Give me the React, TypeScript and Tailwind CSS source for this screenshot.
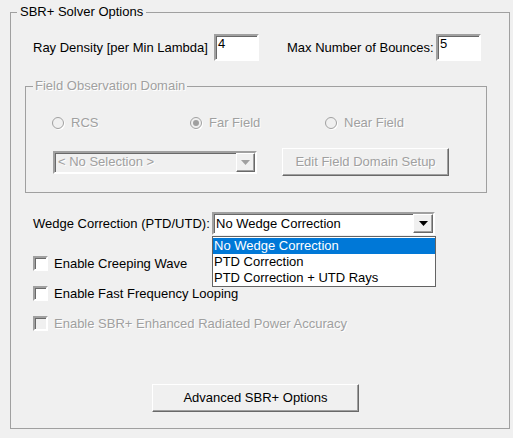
import React from "react";

const sunken =
  "border-2 border-t-[#a0a0a0] border-l-[#a0a0a0] border-b-white border-r-white shadow-[inset_1px_1px_0_#696969]";
const raised =
  "border border-t-white border-l-white border-b-[#696969] border-r-[#696969] shadow-[inset_-1px_-1px_0_#a0a0a0]";
const disabledText = "text-[#a0a0a0] [text-shadow:1px_1px_0_#ffffff]";

function Radio({ label, checked, w }: { label: string; checked?: boolean; w: string }) {
  return (
    <div className={`flex items-center ${w}`}>
      <span className="w-[12px] h-[12px] rounded-full border border-[#a0a0a0] bg-[#f0f0f0] flex items-center justify-center shadow-[1px_1px_0_#ffffff]">
        {checked && <span className="w-[6px] h-[6px] rounded-full bg-[#a0a0a0]" />}
      </span>
      <span className={`ml-[7px] ${disabledText}`}>{label}</span>
    </div>
  );
}

function Check({ label, disabled }: { label: string; disabled?: boolean }) {
  return (
    <div className="flex items-center h-[15px]">
      <span
        className={`w-[15px] h-[15px] ${sunken} ${disabled ? "bg-[#f0f0f0]" : "bg-white"}`}
      />
      <span className={`ml-[6px] ${disabled ? disabledText : "text-black"}`}>{label}</span>
    </div>
  );
}

export default function App() {
  return (
    <div
      className="w-[513px] h-[438px] bg-[#f0f0f0] text-[13px] leading-[14px] text-black overflow-hidden"
      style={{ fontFamily: '"Liberation Sans", Arial, sans-serif' }}
    >
      <fieldset className="ml-[10px] mt-[5px] w-[492px] h-[424px] border border-[#a0a0a0] px-[22px] m-0">
        <legend className="ml-[-16px] px-[3px] text-black">SBR+ Solver Options</legend>

        {/* top numeric inputs */}
        <div className="flex items-center mt-[15px] h-[27px]">
          <span className="w-[181px]">Ray Density [per Min Lambda]</span>
          <div className={`w-[45px] h-[27px] bg-white ${sunken} px-[2px] pt-[1px]`}>4</div>
          <span className="ml-[28px] w-[149px]">Max Number of Bounces:</span>
          <div className={`w-[45px] h-[27px] bg-white ${sunken} px-[2px] pt-[1px]`}>5</div>
        </div>

        {/* field observation domain */}
        <fieldset className="ml-[-8px] mt-[18px] w-[462px] border border-[#a0a0a0] pb-[16px] m-0">
          <legend className={`ml-[7px] px-[2px] ${disabledText}`}>Field Observation Domain</legend>
          <div className="flex items-center h-[14px] mt-[23px] pl-[26px]">
            <Radio label="RCS" w="w-[138px]" />
            <Radio label="Far Field" checked w="w-[135px]" />
            <Radio label="Near Field" w="w-[120px]" />
          </div>
          <div className="flex items-center mt-[18px] ml-[27px]">
            <div className={`w-[204px] h-[23px] ${sunken} flex items-center pl-[3px] ${disabledText}`}>
              <span className="flex-1">&lt; No Selection &gt;</span>
              <span className={`w-[19px] h-[19px] ${raised} flex items-center justify-center`}>
                <svg width="9" height="5" viewBox="0 0 9 5">
                  <path d="M0 0H9L4.5 5Z" fill="#a0a0a0" />
                </svg>
              </span>
            </div>
            <button
              className={`ml-[25px] w-[167px] h-[28px] bg-[#f0f0f0] ${raised} ${disabledText}`}
            >
              Edit Field Domain Setup
            </button>
          </div>
        </fieldset>

        {/* wedge correction */}
        <div className="relative flex items-center mt-[19px] h-[23px]">
          <span className="w-[179px]">Wedge Correction (PTD/UTD):</span>
          <div className={`w-[223px] h-[23px] bg-white ${sunken} flex items-center pl-[2px]`}>
            <span className="flex-1">No Wedge Correction</span>
            <span className={`w-[20px] h-[19px] bg-[#f0f0f0] ${raised} flex items-center justify-center`}>
              <svg width="9" height="5" viewBox="0 0 9 5">
                <path d="M0 0H9L4.5 5Z" fill="#000" />
              </svg>
            </span>
          </div>
          <div className="absolute left-[179px] top-[24px] w-[224px] h-[51px] bg-white border border-[#646464] z-10 py-[1px]">
            <div className="h-[16px] bg-[#0078d7] text-white pl-[1px] flex items-center">No Wedge Correction</div>
            <div className="h-[16px] pl-[1px] flex items-center">PTD Correction</div>
            <div className="h-[16px] pl-[1px] flex items-center">PTD Correction + UTD Rays</div>
          </div>
        </div>

        {/* checkboxes */}
        <div className="flex flex-col gap-[15px] mt-[21px]">
          <Check label="Enable Creeping Wave" />
          <Check label="Enable Fast Frequency Looping" />
          <Check label="Enable SBR+ Enhanced Radiated Power Accuracy" disabled />
        </div>

        <div className="flex mt-[53px] pl-[119px]">
          <button className={`w-[207px] h-[28px] bg-[#f0f0f0] ${raised} text-black`}>
            Advanced SBR+ Options
          </button>
        </div>
      </fieldset>
    </div>
  );
}
